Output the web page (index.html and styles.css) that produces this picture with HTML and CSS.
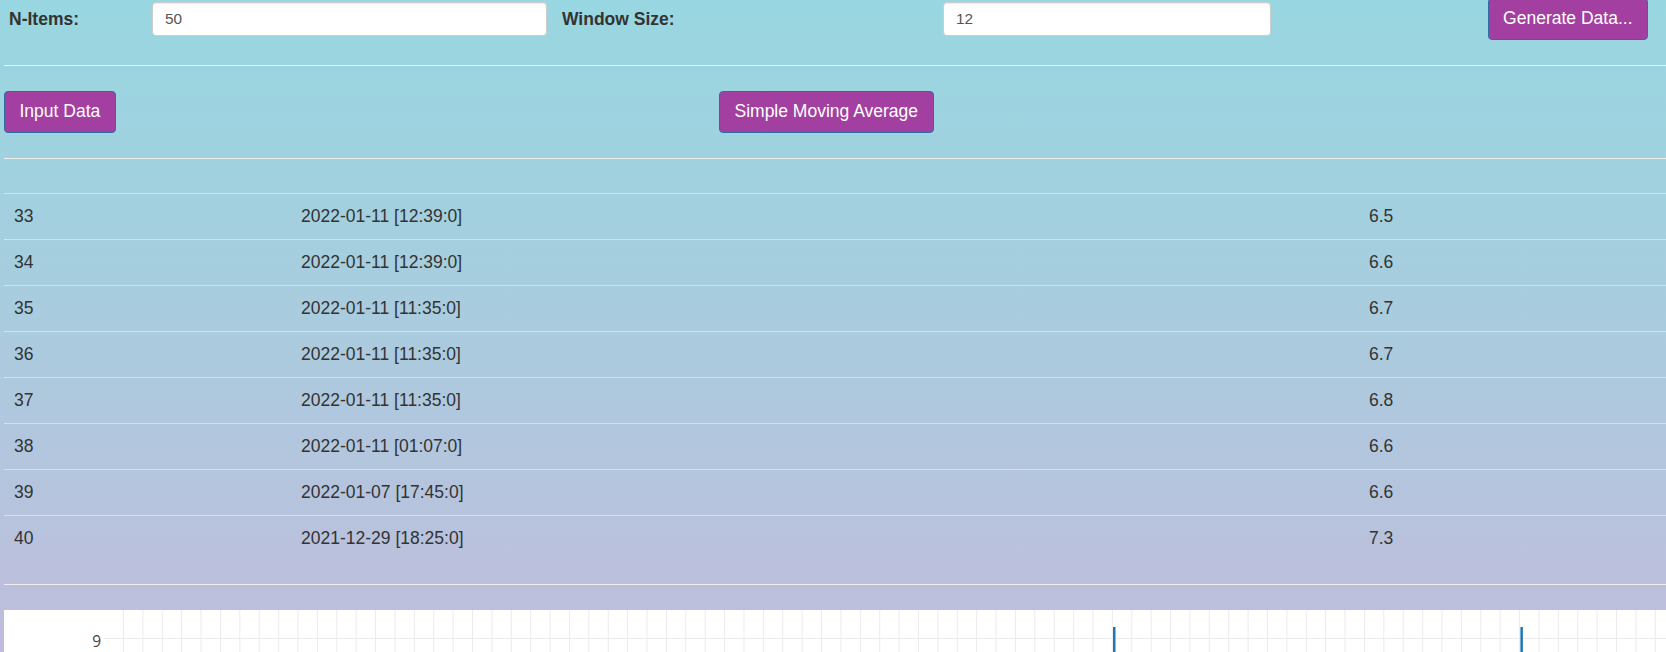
FILE: index.html
```html
<!DOCTYPE html>
<html lang="en">
<head>
<meta charset="utf-8">
<title>Simple Moving Average</title>
<link rel="stylesheet" href="styles.css">
</head>
<body>
<div class="page">
  <div class="controls">
    <label class="lbl lbl-n">N-Items:</label>
    <input class="field" type="text" value="50">
    <label class="lbl lbl-w">Window Size:</label>
    <input class="field" type="text" value="12">
    <button class="btn btn-gen">Generate Data...</button>
  </div>
  <hr class="rule rule-top">
  <div class="actions">
    <button class="btn">Input Data</button>
    <button class="btn">Simple Moving Average</button>
  </div>
  <hr class="rule rule-mid">
  <div class="table">
    <div class="row"><span>33</span><span>2022-01-11 [12:39:0]</span><span>6.5</span></div>
    <div class="row"><span>34</span><span>2022-01-11 [12:39:0]</span><span>6.6</span></div>
    <div class="row"><span>35</span><span>2022-01-11 [11:35:0]</span><span>6.7</span></div>
    <div class="row"><span>36</span><span>2022-01-11 [11:35:0]</span><span>6.7</span></div>
    <div class="row"><span>37</span><span>2022-01-11 [11:35:0]</span><span>6.8</span></div>
    <div class="row"><span>38</span><span>2022-01-11 [01:07:0]</span><span>6.6</span></div>
    <div class="row"><span>39</span><span>2022-01-07 [17:45:0]</span><span>6.6</span></div>
    <div class="row"><span>40</span><span>2021-12-29 [18:25:0]</span><span>7.3</span></div>
  </div>
  <hr class="rule rule-bottom">
  <div class="chart">
    <svg class="plot" width="1662" height="80" viewBox="0 0 1662 80">
      <defs>
        <pattern id="grid" x="119" y="0" width="19.39" height="80" patternUnits="userSpaceOnUse">
          <line x1="0.5" y1="0" x2="0.5" y2="80" stroke="#ebebeb" stroke-width="1"/>
        </pattern>
      </defs>
      <rect x="119" y="0" width="1543" height="80" fill="url(#grid)"/>
      <line x1="100" y1="28.5" x2="1662" y2="28.5" stroke="#ebebeb" stroke-width="1"/>
      <text class="tick" x="97" y="36.5" text-anchor="end">9</text>
      <rect x="1109" y="17" width="2.5" height="63" fill="#1f77b4"/>
      <rect x="1516.4" y="17" width="2.5" height="63" fill="#1f77b4"/>
    </svg>
  </div>
</div>
</body>
</html>
```

FILE: styles.css
```css
html {
  overflow: hidden;
}

body {
  margin: 0;
  padding: 0 0 0 4px;
  font-family: "Liberation Sans", Arial, Helvetica, sans-serif;
  font-size: 17.5px;
  color: #333;
  background: linear-gradient(to bottom, #98d7e1 0px, #a4cfdf 240px, #b1c7de 430px, #bebedc 620px, #c2bcdb 700px);
  background-repeat: no-repeat;
  min-height: 760px;
}

.page {
  width: 100%;
}

.controls {
  display: grid;
  grid-template-columns: 148px 395px 396px 328px 1fr;
  align-items: center;
  height: 42px;
  margin-top: -2px;
}

.lbl {
  font-weight: bold;
  color: #333;
}

.lbl-n {
  padding-left: 5px;
}

.lbl-w {
  padding-left: 15px;
}

.field {
  box-sizing: border-box;
  width: 100%;
  height: 34px;
  margin: 0;
  padding: 0 12px;
  border: 1px solid #ccc;
  border-radius: 4px;
  background: #fff;
  box-shadow: inset 0 1px 1px rgba(0, 0, 0, 0.075);
  font-family: "Liberation Sans", Arial, Helvetica, sans-serif;
  font-size: 15.4px;
  color: #555;
}

.btn {
  box-sizing: border-box;
  height: 42px;
  margin: 0;
  padding: 0 14.5px;
  border: 1px solid #2e6da4;
  border-radius: 4px;
  background: #a23fa0;
  color: #fff;
  font-family: "Liberation Sans", Arial, Helvetica, sans-serif;
  font-size: 17.5px;
  line-height: 1;
  white-space: nowrap;
}

.btn-gen {
  justify-self: end;
  margin-right: 18px;
}

.rule {
  height: 0;
  border: 0;
  border-top: 1px solid #eee;
  margin: 0;
}

.rule-top {
  margin-top: 25px;
  margin-bottom: 25px;
}

.rule-mid {
  margin-top: 25px;
  margin-bottom: 34px;
}

.rule-bottom {
  margin-top: 23px;
  margin-bottom: 25px;
}

.actions {
  display: grid;
  grid-template-columns: 715px 1fr;
  justify-items: start;
  height: 42px;
}

.table {
  width: 100%;
}

.row {
  box-sizing: border-box;
  display: grid;
  grid-template-columns: 287px 1068px 1fr;
  align-items: center;
  height: 46px;
  padding-left: 10px;
  border-top: 1px solid #ddd;
}

.chart {
  background: #fff;
  height: 80px;
}

.plot {
  display: block;
}

.tick {
  font-family: "Open Sans", Verdana, Arial, sans-serif;
  font-size: 15.5px;
  fill: #444;
}
```
